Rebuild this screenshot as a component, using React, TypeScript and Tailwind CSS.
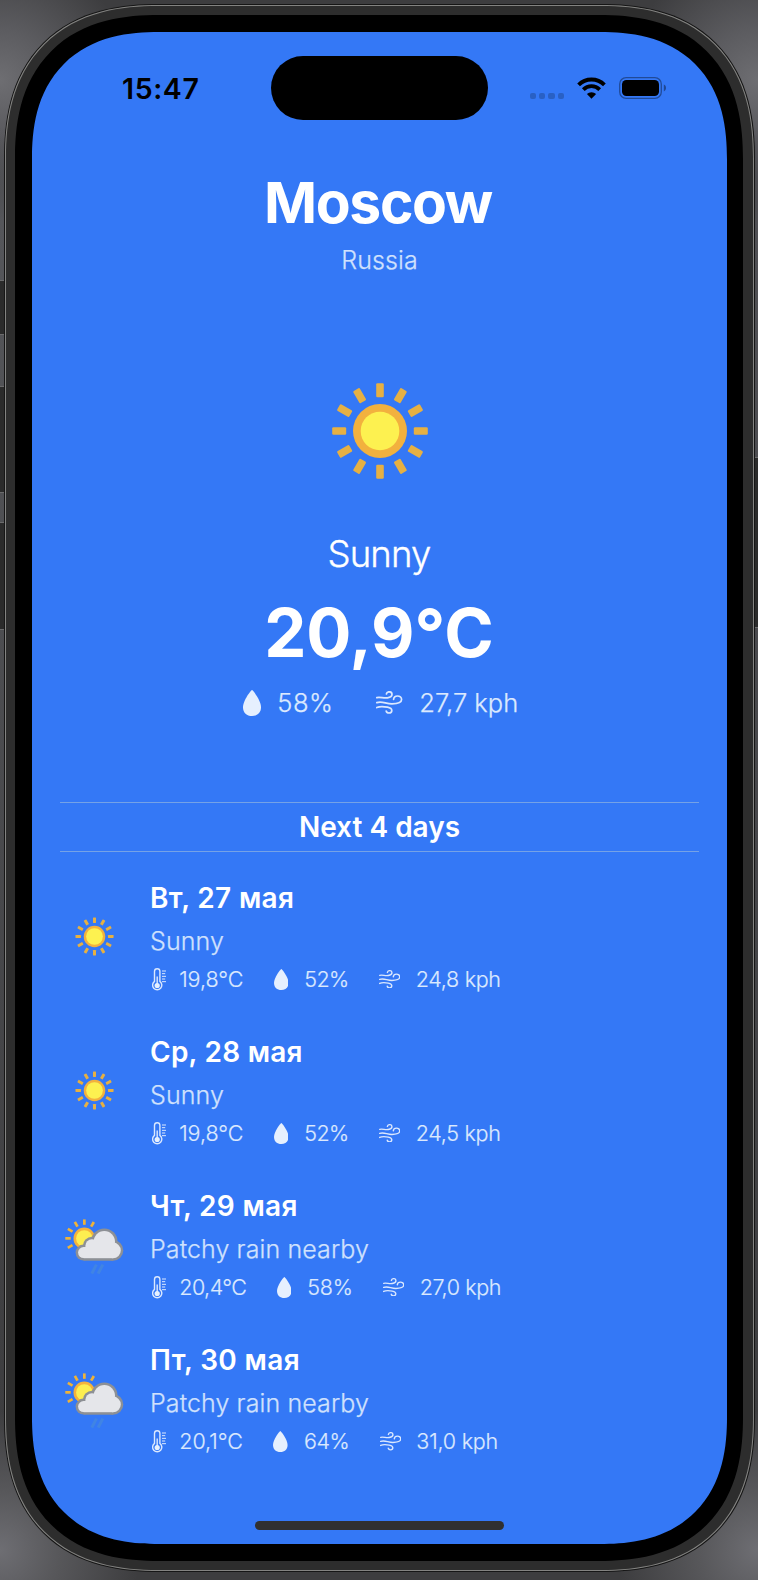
type IconProps = { className?: string };

const RAYS = [0, 30, 60, 90, 120, 150, 180, 210, 240, 270, 300, 330];

function SunIcon({ className, core = 19.3 }: IconProps & { core?: number }) {
  return (
    <svg viewBox="0 0 128 128" className={className}>
      {RAYS.map((a) => (
        <rect key={a} x="60.2" y="16.2" width="7.6" height="14" rx="1.2" fill="#e6b043" transform={`rotate(${a} 64 64)`} />
      ))}
      <circle cx="64" cy="64" r="27" fill="#f2b13e" />
      <circle cx="64" cy="64" r={core} fill="#fdf150" />
    </svg>
  );
}

function PatchyRainIcon({ className }: IconProps) {
  return (
    <svg viewBox="0 0 68 68" className={className}>
      {[0, 30, 240, 270, 300, 330].map((a) => (
        <rect key={a} x="22" y="8.4" width="2.7" height="5.4" fill="#efb338" transform={`rotate(${a} 23.3 27.4)`} />
      ))}
      <circle cx="23.3" cy="27.4" r="10.8" fill="#f4b23c" />
      <circle cx="23.3" cy="27.4" r="8.2" fill="#fdee50" />
      <g fill="#8d9095">
        <circle cx="43.3" cy="30.7" r="13.2" />
        <circle cx="31" cy="35" r="9.2" />
        <circle cx="22.6" cy="41.6" r="8" />
        <circle cx="52" cy="39.4" r="10.3" />
        <rect x="22.6" y="36" width="29.4" height="13.7" />
      </g>
      <g fill="#e5e6ea">
        <circle cx="43.3" cy="30.7" r="10.7" />
        <circle cx="31" cy="35" r="6.7" />
        <circle cx="22.6" cy="41.6" r="5.5" />
        <circle cx="52" cy="39.4" r="7.8" />
        <rect x="22.6" y="36" width="29.4" height="11.2" />
      </g>
      <path d="M30.8 62.6 35.4 53.6M37.2 62.6 41.8 53.6" stroke="#4084e4" strokeWidth="3" />
    </svg>
  );
}

function DropIcon({ className }: IconProps) {
  return (
    <svg viewBox="0 0 18 26" className={className} fill="#e6f0fe">
      <path d="M9 0C9.9 0 18 10.6 18 17.2C18 22.6 14.2 26 9 26S0 22.6 0 17.2C0 10.6 8.1 0 9 0Z" />
    </svg>
  );
}

function WindIcon({ className }: IconProps) {
  return (
    <svg viewBox="0 0 26.4 22.8" className={className} fill="none" stroke="#dbe8fe" strokeWidth="1.7" strokeLinecap="round">
      <path d="M.8 6.6C4.5 5.6 7.5 7.6 11.5 6.8C14.5 6.2 16 5 16 3.4C16 1.8 14.8.8 13.2.8C11.7.8 10.6 1.7 10.4 3" />
      <path d="M.8 11.6C6 9.6 10 13 16 12.9C22 12.8 25.6 11.5 25.6 8.6C25.6 6.4 23.8 5 21.5 5C19.3 5 17.8 6.4 17.6 8.4" />
      <path d="M.8 16.6C4.5 14.8 7.5 15.4 11.5 16.2C14.4 16.8 15.8 17.8 15.8 19.4C15.8 21 14.6 22 13 22C11.6 22 10.5 21.2 10.2 20" />
    </svg>
  );
}

function ThermometerIcon({ className }: IconProps) {
  return (
    <svg viewBox="0 0 14 23" className={className} fill="none" stroke="#dbe8fe" strokeWidth="1.4">
      <path d="M2.5 3.4a2.7 2.7 0 0 1 5.4 0V13.4a4.6 4.6 0 1 1-5.4 0Z" />
      <path d="M5.2 8.5V16" />
      <circle cx="5.2" cy="17.5" r="2.6" fill="#e6f0fe" stroke="none" />
      <path d="M10 3H14M10 5.67H13.2M10 8.33H14M10 11H13.2M10 13.67H14" strokeWidth="1" />
    </svg>
  );
}

function WifiIcon({ className }: IconProps) {
  return (
    <svg viewBox="0 0 29 22" className={className} fill="none" stroke="#000">
      <path d="M1.6 7.8A18.2 18.2 0 0 1 27.4 7.8" strokeWidth="3.9" />
      <path d="M6.3 12.6A11.6 11.6 0 0 1 22.7 12.6" strokeWidth="3.8" />
      <path d="M14.5 21.7 9.9 17.1A6.5 6.5 0 0 1 19.1 17.1Z" fill="#000" stroke="none" />
    </svg>
  );
}

function BatteryIcon({ className }: IconProps) {
  return (
    <svg viewBox="0 0 48 22" className={className}>
      <rect x="0.7" y="0.7" width="41.6" height="20.6" rx="6.4" fill="none" stroke="#000" strokeOpacity="0.38" strokeWidth="1.3" />
      <rect x="3" y="3" width="37" height="16" rx="4.4" fill="#000" />
      <path d="M44.8 7.6C46.3 8.2 47 9.5 47 11S46.3 13.8 44.8 14.4Z" fill="#000" fillOpacity="0.4" />
    </svg>
  );
}

type Value = { text: string; tracking: string };
type Day = { date: string; dateTracking: string; condition: string; temp: Value; humidity: Value; wind: Value };

const DAYS: Day[] = [
  {
    date: "Вт, 27 мая",
    dateTracking: "tracking-[0.33px]",
    condition: "Sunny",
    temp: { text: "19,8°C", tracking: "tracking-[-0.05px]" },
    humidity: { text: "52%", tracking: "tracking-[-0.6px]" },
    wind: { text: "24,8 kph", tracking: "tracking-[-0.3px]" },
  },
  {
    date: "Ср, 28 мая",
    dateTracking: "tracking-[0.25px]",
    condition: "Sunny",
    temp: { text: "19,8°C", tracking: "tracking-[-0.05px]" },
    humidity: { text: "52%", tracking: "tracking-[-0.6px]" },
    wind: { text: "24,5 kph", tracking: "tracking-[-0.3px]" },
  },
  {
    date: "Чт, 29 мая",
    dateTracking: "tracking-[0.33px]",
    condition: "Patchy rain nearby",
    temp: { text: "20,4°C", tracking: "tracking-[-0.5px]" },
    humidity: { text: "58%", tracking: "tracking-[-0.2px]" },
    wind: { text: "27,0 kph", tracking: "tracking-[-0.4px]" },
  },
  {
    date: "Пт, 30 мая",
    dateTracking: "tracking-[0.35px]",
    condition: "Patchy rain nearby",
    temp: { text: "20,1°C", tracking: "tracking-normal" },
    humidity: { text: "64%", tracking: "tracking-[-0.4px]" },
    wind: { text: "31,0 kph", tracking: "tracking-[-0.2px]" },
  },
];

function StatusBar() {
  return (
    <div className="flex h-16 items-center">
      <div className="w-[239px] pl-[90px] pt-px text-[28.5px] font-semibold leading-8 tracking-[0.6px] text-black">15:47</div>
      <div className="h-16 w-[217px] rounded-[32px] bg-black" />
      <div className="ml-[42px] flex items-center">
        <div className="flex gap-[3px] pt-4">
          {[0, 1, 2, 3].map((i) => (
            <span key={i} className="h-1.5 w-[6.2px] rounded-[2px] bg-black/20" />
          ))}
        </div>
        <WifiIcon className="ml-[13px] h-[22px] w-[29px]" />
        <BatteryIcon className="ml-[13px] h-[22px] w-12" />
      </div>
    </div>
  );
}

function DayRow({ day }: { day: Day }) {
  return (
    <div className="flex h-[111px] items-center">
      <div className="flex w-[68px] shrink-0 justify-center">
        {day.condition === "Sunny" ? <SunIcon core={21} className="mb-px size-[51px]" /> : <PatchyRainIcon className="ml-px size-[68px] shrink-0" />}
      </div>
      <div className="ml-[22px] flex flex-col whitespace-nowrap">
        <div className={`text-[28px] font-semibold leading-[34px] ${day.dateTracking}`}>{day.date}</div>
        <div className="mt-[11px] text-[25px] font-light leading-[30px] tracking-[0.1px] text-[#d0e1fd] [-webkit-text-stroke:0.25px]">{day.condition}</div>
        <div className="mt-2.5 flex h-[26px] items-center text-[21.5px] font-light leading-[26px] text-[#dce9fe] [-webkit-text-stroke:0.2px]">
          <ThermometerIcon className="ml-[1.6px] mr-[13.6px] h-[23px] w-3.5" />
          <span className={day.temp.tracking}>{day.temp.text}</span>
          <DropIcon className="ml-[30.3px] mr-4 h-[21px] w-[14.6px]" />
          <span className={day.humidity.tracking}>{day.humidity.text}</span>
          <WindIcon className="ml-[30.3px] mr-[15.4px] h-[18.5px] w-[21.4px]" />
          <span className={day.wind.tracking}>{day.wind.text}</span>
        </div>
      </div>
    </div>
  );
}

function Forecast() {
  return (
    <section className="mx-7 mt-[84px]">
      <h2 className="border-y border-[#75a2e6] pb-[7px] pt-[7px] text-center text-[28px] font-semibold leading-[34px]">Next 4 days</h2>
      <div className="mt-[29px] flex flex-col gap-[43.1px]">
        {DAYS.map((day) => (
          <DayRow key={day.date} day={day} />
        ))}
      </div>
    </section>
  );
}

function Screen() {
  return (
    <div className="flex h-[1512px] w-[695px] flex-col overflow-hidden rounded-[127px] bg-[#3478f6] pt-6 text-white [corner-shape:superellipse(1.26)]">
      <StatusBar />
      <section className="flex flex-col items-center">
        <h1 className="mr-[3px] mt-12 text-[57px] font-bold leading-[70px] tracking-[-1.4px]">Moscow</h1>
        <p className="mt-[7px] text-[25px] font-light leading-[30px] tracking-[0.1px] text-[#d0e1fd] [-webkit-text-stroke:0.25px]">Russia</p>
        <SunIcon className="mt-[92px] size-32" />
        <p className="mr-px mt-[37px] text-[36.5px] font-light leading-[44px] tracking-[-0.8px] [-webkit-text-stroke:0.35px]">Sunny</p>
        <p className="mr-px mt-[17px] text-[67px] font-bold leading-[80px]">20,9°C</p>
        <div className="ml-0.5 mt-[14px] flex h-[31px] items-center text-[25.5px] font-light leading-[31px] text-[#dce9fe] [-webkit-text-stroke:0.25px]">
          <DropIcon className="mr-[16.5px] h-[26px] w-[18px]" />
          <span className="tracking-[0.5px]">58%</span>
          <WindIcon className="ml-[43px] mr-[16.5px] h-[22.8px] w-[26.4px]" />
          <span>27,7 kph</span>
        </div>
      </section>
      <Forecast />
      <div className="mx-auto mb-3.5 mt-auto h-[9px] w-[249px] rounded-full bg-[#303030]" />
    </div>
  );
}

function SideButton({ className }: IconProps) {
  return <div className={`border-y border-y-[#6b6b6c] bg-[#2b2b2b] ${className}`} />;
}

function Phone() {
  return (
    <div className="mt-1 h-[1568px] w-[751px] rounded-[155px] border border-[#161616] bg-[#2d2d2d] [corner-shape:superellipse(1.26)]">
      <div className="h-[1566px] w-[749px] rounded-[154px] border-[1.5px] border-[#838381] pl-[9px] pt-[9px] [corner-shape:superellipse(1.26)]">
        <div className="h-[1546px] w-[728px] rounded-[144px] bg-black pl-[17px] pt-[17px] [corner-shape:superellipse(1.26)]">
          <Screen />
        </div>
      </div>
    </div>
  );
}

export default function App() {
  return (
    <div className="flex h-[1580px] w-[758px] overflow-hidden bg-[#3d3d3f] bg-[radial-gradient(circle_at_0px_80px,#6e6e72_0px,#5c5c60_50px,transparent_130px),radial-gradient(circle_at_758px_80px,#6e6e72_0px,#5c5c60_50px,transparent_130px),radial-gradient(circle_at_0px_1550px,#6e6e73_0px,#57575a_60px,transparent_140px),radial-gradient(circle_at_758px_1550px,#6e6e73_0px,#57575a_60px,transparent_140px)] font-['Inter',sans-serif]">
      <div className="flex w-1 flex-col bg-linear-to-b from-transparent from-8% via-[#55565a] via-14% to-transparent to-90%">
        <SideButton className="mt-[280px] h-[55px]" />
        <SideButton className="mt-[51px] h-[107px]" />
        <SideButton className="mt-[29px] h-[108px]" />
      </div>
      <Phone />
      <div className="flex w-[3px] flex-col bg-linear-to-b from-transparent from-8% via-[#505054] via-14% to-transparent to-90%">
        <SideButton className="mt-[457px] h-[171px]" />
      </div>
    </div>
  );
}
